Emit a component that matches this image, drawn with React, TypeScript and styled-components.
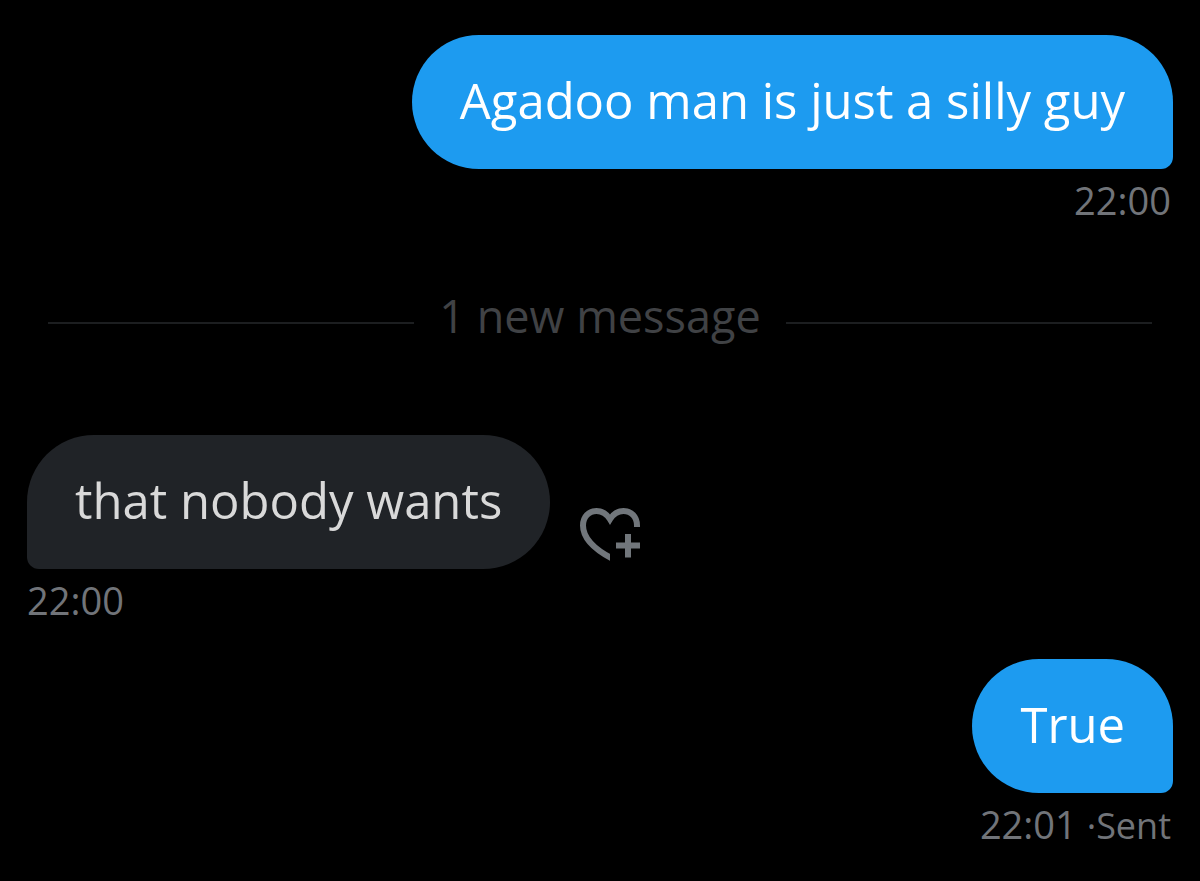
import React from 'react';
import styled, { createGlobalStyle } from 'styled-components';

const GlobalStyle = createGlobalStyle`
  *, *::before, *::after { box-sizing: border-box; }
  body {
    margin: 0;
    background: #000;
    font-family: 'Open Sans', 'Noto Sans', sans-serif;
  }
`;

type Side = 'sent' | 'received';

const Conversation = styled.main`
  display: flex;
  flex-direction: column;
  padding: 35px 27px 32px;
`;

const Message = styled.article<{ $side: Side }>`
  display: flex;
  flex-direction: column;
  align-items: ${({ $side }) => ($side === 'sent' ? 'flex-end' : 'flex-start')};
`;

const BubbleRow = styled.div`
  display: flex;
  align-items: flex-end;
  gap: 30px;
`;

const Bubble = styled.p<{ $side: Side }>`
  margin: 0;
  padding: 31px 48px 35px;
  font-size: 49px;
  line-height: 68px;
  color: ${({ $side }) => ($side === 'sent' ? '#fff' : '#d9d9d9')};
  background: ${({ $side }) => ($side === 'sent' ? '#1d9bf0' : '#202327')};
  border-radius: ${({ $side }) =>
    $side === 'sent' ? '67px 67px 12px 67px' : '67px 67px 67px 12px'};
`;

const Meta = styled.div`
  padding: 7px 2px 1px 0;
  font-size: 38px;
  line-height: 48px;
  color: #717479;
`;

const Status = styled.span`
  font-size: 36px;
`;

const ReactButton = styled.button`
  display: block;
  margin: 0 0 8px;
  padding: 0;
  border: 0;
  background: none;
  color: #71767b;
  cursor: pointer;

  svg { display: block; }
`;

const Divider = styled.div`
  display: flex;
  align-items: center;
  gap: 25px;
  margin: 61px 21px 75px;
  color: #404245;

  &::before, &::after {
    content: '';
    flex: 1;
    height: 2px;
    background: #1c1e20;
  }
`;

const DividerLabel = styled.span`
  padding-bottom: 14px;
  font-size: 45px;
  line-height: 60px;
`;

const Spacer = styled.div`
  height: 34px;
`;

function HeartPlusIcon() {
  return (
    <svg width="60" height="53" viewBox="0 0 60 53" fill="none" stroke="currentColor" strokeWidth="6" aria-hidden="true">
      <defs>
        <clipPath id="heart-cut">
          <path d="M0 0H60V19H30V53H0Z" />
        </clipPath>
      </defs>
      <path
        clipPath="url(#heart-cut)"
        d="M57 21V17.500C57 8.500 51 3 43.500 3C38 3 33.500 5.500 30 11.300C26.500 5.500 22 3 16.500 3C9 3 3 8.500 3 17.500C3 30 14 41 32 50.500"
      />
      <path d="M48 26V49.500M36 37.500H60" />
    </svg>
  );
}

export default function App() {
  return (
    <>
      <GlobalStyle />
      <Conversation>
        <Message $side="sent">
          <Bubble $side="sent">Agadoo man is just a silly guy</Bubble>
          <Meta><time>22:00</time></Meta>
        </Message>
        <Divider><DividerLabel>1 new message</DividerLabel></Divider>
        <Message $side="received">
          <BubbleRow>
            <Bubble $side="received">that nobody wants</Bubble>
            <ReactButton type="button" aria-label="Add reaction">
              <HeartPlusIcon />
            </ReactButton>
          </BubbleRow>
          <Meta><time>22:00</time></Meta>
        </Message>
        <Spacer />
        <Message $side="sent">
          <Bubble $side="sent">True</Bubble>
          <Meta><time>22:01</time> <Status>·Sent</Status></Meta>
        </Message>
      </Conversation>
    </>
  );
}
